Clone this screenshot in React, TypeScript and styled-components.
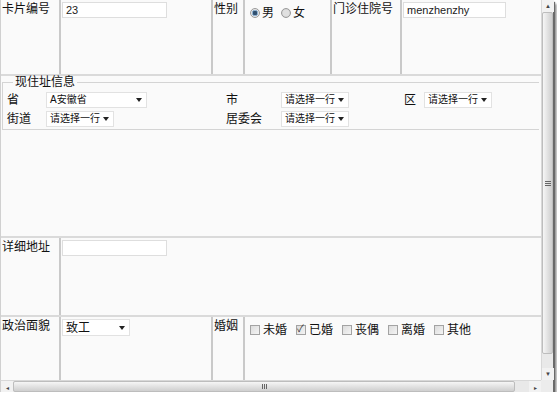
import styled, { createGlobalStyle } from 'styled-components';

const GlobalStyle = createGlobalStyle`
  html, body {
    margin: 0;
    padding: 0;
    background: #ffffff;
  }
  body {
    font-family: 'Liberation Sans', 'Noto Sans CJK SC', sans-serif;
    font-size: 12px;
    color: #111;
  }
`;

const cjk = `'Liberation Sans', 'Noto Sans CJK SC', sans-serif`;

export default function App() {
  return (
    <>
      <GlobalStyle />
      <Frame>
        <Viewport>
          <Row $height={74}>
            <Cell $width={60}>
              <Label>卡片编号</Label>
            </Cell>
            <Cell $width={152}>
              <TextInput $width={105}>23</TextInput>
            </Cell>
            <Cell $width={32}>
              <Label>性别</Label>
            </Cell>
            <Cell $width={87}>
              <Options>
                <Option>
                  <Radio $checked />男
                </Option>
                <Option>
                  <Radio />女
                </Option>
              </Options>
            </Cell>
            <Cell $width={70}>
              <Label>门诊住院号</Label>
            </Cell>
            <Cell $grow>
              <TextInput $width={103}>menzhenzhy</TextInput>
            </Cell>
          </Row>

          <AddressBlock>
            <Fieldset>
              <Legend>现住址信息</Legend>
              <AddressGrid>
                <FieldLabel>省</FieldLabel>
                <div>
                  <Select $width={101}>A安徽省</Select>
                </div>
                <FieldLabel>市</FieldLabel>
                <div>
                  <Select $width={68}>请选择一行</Select>
                </div>
                <FieldLabel>区</FieldLabel>
                <div>
                  <Select $width={68}>请选择一行</Select>
                </div>
                <FieldLabel>街道</FieldLabel>
                <div>
                  <Select $width={68}>请选择一行</Select>
                </div>
                <FieldLabel>居委会</FieldLabel>
                <div>
                  <Select $width={68}>请选择一行</Select>
                </div>
              </AddressGrid>
            </Fieldset>
          </AddressBlock>

          <Row $height={77}>
            <Cell $width={60}>
              <Label>详细地址</Label>
            </Cell>
            <Cell $grow>
              <TextInput $width={105} />
            </Cell>
          </Row>

          <Row $height={65} $last>
            <Cell $width={60}>
              <Label>政治面貌</Label>
            </Cell>
            <Cell $width={152}>
              <Select $width={68} $tall>致工</Select>
            </Cell>
            <Cell $width={32}>
              <Label>婚姻</Label>
            </Cell>
            <Cell $grow>
              <Options $gap={9}>
                <Option>
                  <Checkbox />未婚
                </Option>
                <Option>
                  <Checkbox $checked />已婚
                </Option>
                <Option>
                  <Checkbox />丧偶
                </Option>
                <Option>
                  <Checkbox />离婚
                </Option>
                <Option>
                  <Checkbox />其他
                </Option>
              </Options>
            </Cell>
          </Row>
        </Viewport>

        <VScroll>
          <ArrowButton>▲</ArrowButton>
          <VTrack>
            <VThumb>
              <Grip $vertical />
            </VThumb>
          </VTrack>
          <ArrowButton>▼</ArrowButton>
        </VScroll>

        <HScroll>
          <ArrowButton>◂</ArrowButton>
          <HTrack>
            <HThumb>
              <Grip />
            </HThumb>
          </HTrack>
          <ArrowButton>▸</ArrowButton>
        </HScroll>
        <Corner />
      </Frame>
    </>
  );
}

const Frame = styled.div`
  width: 553px;
  height: 392px;
  display: grid;
  grid-template-columns: 541px 12px;
  grid-template-rows: 380px 12px;
  background: #fafafa;
  box-shadow: 2px 2px 1px #6a6a6a, 4px 4px 2px rgba(0, 0, 0, 0.35);
`;

const Viewport = styled.div`
  display: flex;
  flex-direction: column;
  overflow: hidden;
  background: #fafafa;
  border-left: 1px solid #d0d0d0;
`;

const Row = styled.div<{ $height: number; $last?: boolean }>`
  display: flex;
  flex: ${({ $last }) => ($last ? '1' : 'none')};
  height: ${({ $height }) => $height}px;
  border-bottom: ${({ $last }) => ($last ? 'none' : '2px solid #dadada')};
`;

const Cell = styled.div<{ $width?: number; $grow?: boolean }>`
  width: ${({ $width }) => ($width ? `${$width}px` : 'auto')};
  flex: ${({ $grow }) => ($grow ? '1' : 'none')};
  box-sizing: border-box;
  padding: 2px 1px;
  border-right: 2px solid #c9c9c9;

  &:last-child {
    border-right: none;
  }
`;

const Label = styled.div`
  font-family: ${cjk};
  font-size: 12px;
  line-height: 14px;
  color: #111;
  white-space: nowrap;
`;

const TextInput = styled.div<{ $width: number }>`
  width: ${({ $width }) => $width}px;
  height: 16px;
  box-sizing: border-box;
  background: #ffffff;
  border: 1px solid #dedede;
  font-family: 'Liberation Sans', sans-serif;
  font-size: 11px;
  line-height: 14px;
  padding-left: 3px;
  color: #222;
`;

const Options = styled.div<{ $gap?: number }>`
  display: flex;
  align-items: center;
  gap: ${({ $gap }) => $gap ?? 7}px;
  padding: 4px 0 0 4px;
`;

const Option = styled.span`
  display: inline-flex;
  align-items: center;
  gap: 2px;
  font-family: ${cjk};
  font-size: 12px;
  line-height: 14px;
`;

const Radio = styled.span<{ $checked?: boolean }>`
  width: 10px;
  height: 10px;
  box-sizing: border-box;
  border-radius: 50%;
  border: 1px solid #9a9a9a;
  background: ${({ $checked }) =>
    $checked
      ? 'radial-gradient(circle, #2f4f6f 0 2px, #8fb0cf 2.5px 3px, #e6e6e6 3.5px)'
      : 'radial-gradient(circle, #e0e0e0 0 3px, #cfcfcf 4px)'};
`;

const Checkbox = styled.span<{ $checked?: boolean }>`
  width: 10px;
  height: 10px;
  box-sizing: border-box;
  border: 1px solid #a3a3a3;
  background: linear-gradient(135deg, #dcdcdc, #f4f4f4);
  margin-right: 1px;
  position: relative;

  &::after {
    content: ${({ $checked }) => ($checked ? "'✓'" : "''")};
    position: absolute;
    left: 0;
    top: -3px;
    font-size: 10px;
    line-height: 12px;
    color: #333;
  }
`;

const AddressBlock = styled.div`
  height: 162px;
  box-sizing: border-box;
  padding: 0 2px 0 1px;
  border-bottom: 2px solid #dadada;
`;

const Fieldset = styled.fieldset`
  margin: 0;
  padding: 0 0 2px 4px;
  border: 1px solid #d4d4d4;
  border-right: none;
  min-width: 0;
`;

const Legend = styled.legend`
  font-family: ${cjk};
  font-size: 12px;
  line-height: 13px;
  padding: 0 2px;
  margin-left: 6px;
`;

const AddressGrid = styled.div`
  display: grid;
  grid-template-columns: 39px 180px 55px 123px 20px 1fr;
  row-gap: 3px;
  padding-top: 3px;
`;

const FieldLabel = styled.div`
  font-family: ${cjk};
  font-size: 12px;
  line-height: 16px;
  white-space: nowrap;
`;

const Select = styled.div<{ $width: number; $tall?: boolean }>`
  width: ${({ $width }) => $width}px;
  height: ${({ $tall }) => ($tall ? 17 : 16)}px;
  box-sizing: border-box;
  display: flex;
  align-items: center;
  justify-content: space-between;
  background: #ffffff;
  border: 1px solid #e2e2e2;
  font-family: ${cjk};
  font-size: ${({ $tall }) => ($tall ? 12 : 10)}px;
  line-height: 14px;
  padding: 0 4px 0 3px;
  white-space: nowrap;

  &::after {
    content: '';
    border-left: 3px solid transparent;
    border-right: 3px solid transparent;
    border-top: 4px solid #222;
  }
`;

const VScroll = styled.div`
  display: flex;
  flex-direction: column;
  background: #e9e9e9;
  border-left: 1px solid #d8d8d8;
`;

const HScroll = styled.div`
  display: flex;
  background: #e9e9e9;
  border-top: 1px solid #d8d8d8;
  border-left: 1px solid #d0d0d0;
`;

const Corner = styled.div`
  background: #ececec;
`;

const ArrowButton = styled.div`
  flex: none;
  width: 12px;
  height: 12px;
  display: flex;
  align-items: center;
  justify-content: center;
  font-size: 6px;
  color: #444;
  background: #f2f2f2;
`;

const VTrack = styled.div`
  flex: 1;
  padding: 0 0 14px 0;
  display: flex;
`;

const VThumb = styled.div`
  flex: 1;
  display: flex;
  align-items: center;
  justify-content: center;
  border: 1px solid #bdbdbd;
  border-radius: 2px;
  background: linear-gradient(90deg, #f6f6f6, #dedede 60%, #cfcfcf);
`;

const HTrack = styled.div`
  flex: 1;
  padding-right: 14px;
  display: flex;
`;

const HThumb = styled.div`
  flex: 1;
  display: flex;
  align-items: center;
  justify-content: center;
  border: 1px solid #bdbdbd;
  border-radius: 2px;
  background: linear-gradient(180deg, #f6f6f6, #dedede 60%, #cfcfcf);
`;

const Grip = styled.div<{ $vertical?: boolean }>`
  width: ${({ $vertical }) => ($vertical ? '6px' : '5px')};
  height: ${({ $vertical }) => ($vertical ? '5px' : '5px')};
  background: ${({ $vertical }) =>
    $vertical
      ? 'repeating-linear-gradient(180deg, #666 0 1px, transparent 1px 2px)'
      : 'repeating-linear-gradient(90deg, #666 0 1px, transparent 1px 2px)'};
`;
